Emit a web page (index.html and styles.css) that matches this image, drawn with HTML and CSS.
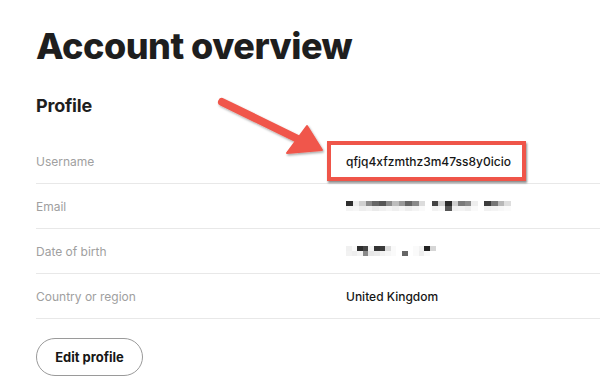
FILE: index.html
```html
<!DOCTYPE html>
<html lang="en">
<head>
<meta charset="utf-8">
<title>Account overview</title>
<link rel="stylesheet" href="styles.css">
</head>
<body>
<main class="page">
  <h1 class="title">Account overview</h1>
  <h2 class="section">Profile</h2>
  <div class="table">
    <div class="row">
      <div class="label">Username</div>
      <div class="value"><span class="highlight">qfjq4xfzmthz3m47ss8y0icio</span></div>
    </div>
    <div class="row">
      <div class="label">Email</div>
      <div class="value">
        <div class="pix wide">
          <div class="pix-line">
            <i style="background:#2e2e2e"></i><i style="background:#eeeeee"></i><i style="background:#d0d0d0"></i><i style="background:#8a8a8a"></i><i style="background:#666"></i><i style="background:#555"></i><i style="background:#8c8c8c"></i><i style="background:#bdbdbd"></i><i style="background:#9a9a9a"></i><i style="background:#666"></i><i style="background:#8a8a8a"></i><i style="background:#dcdcdc"></i><i class="gap"></i><i style="background:#444"></i><i style="background:#cfcfcf"></i><i style="background:#2a2a2a"></i><i style="background:#cfcfcf"></i><i style="background:#7a7a7a"></i><i style="background:#8a8a8a"></i><i style="background:#eee"></i><i class="gap"></i><i style="background:#3c3c3c"></i><i style="background:#777"></i><i style="background:#b8b8b8"></i><i style="background:#dedede"></i>
          </div>
          <div class="pix-line">
            <i style="background:#f4f4f4"></i><i style="background:#f7f7f7"></i><i style="background:#eeeeee"></i><i style="background:#f2f2f2"></i><i style="background:#eaeaea"></i><i style="background:#f0f0f0"></i><i style="background:#f5f5f5"></i><i style="background:#efefef"></i><i style="background:#f6f6f6"></i><i style="background:#eeeeee"></i><i style="background:#f4f4f4"></i><i style="background:#fafafa"></i><i class="gap"></i><i style="background:#f2f2f2"></i><i style="background:#f7f7f7"></i><i style="background:#555"></i><i style="background:#f0f0f0"></i><i style="background:#f3f3f3"></i><i style="background:#eeeeee"></i><i style="background:#fafafa"></i><i class="gap"></i><i style="background:#f1f1f1"></i><i style="background:#f4f4f4"></i><i style="background:#f8f8f8"></i><i style="background:#fbfbfb"></i>
          </div>
        </div>
      </div>
    </div>
    <div class="row">
      <div class="label">Date of birth</div>
      <div class="value">
        <div class="pix">
          <div class="pix-line">
            <i style="background:#f0f0f0"></i><i style="background:#fafafa"></i><i style="background:#2e2e2e"></i><i style="background:#444"></i><i style="background:#f4f4f4"></i><i style="background:#333"></i><i style="background:#3a3a3a"></i><i style="background:#dcdcdc"></i><i style="background:#fafafa"></i><i style="background:#fff"></i><i style="background:#fff"></i><i style="background:#fff"></i><i style="background:#fafafa"></i><i style="background:#f2f2f2"></i><i style="background:#222"></i><i style="background:#d6d6d6"></i>
          </div>
          <div class="pix-line">
            <i style="background:#f2f2f2"></i><i style="background:#eeeeee"></i><i style="background:#f4f4f4"></i><i style="background:#8a8a8a"></i><i style="background:#e6e6e6"></i><i style="background:#eaeaea"></i><i style="background:#f2f2f2"></i><i style="background:#f6f6f6"></i><i style="background:#fafafa"></i><i style="background:#fff"></i><i style="background:#666"></i><i style="background:#fff"></i><i style="background:#fafafa"></i><i style="background:#eeeeee"></i><i style="background:#fafafa"></i><i style="background:#fff"></i>
          </div>
        </div>
      </div>
    </div>
    <div class="row">
      <div class="label">Country or region</div>
      <div class="value">United Kingdom</div>
    </div>
  </div>
  <button class="btn" type="button">Edit profile</button>

  <svg class="arrow" width="130" height="80" viewBox="0 0 130 80" aria-hidden="true">
    <defs>
      <filter id="sh" x="-20%" y="-20%" width="140%" height="140%">
        <feDropShadow dx="1" dy="1.5" stdDeviation="1" flood-color="#000" flood-opacity="0.35"/>
      </filter>
    </defs>
    <g filter="url(#sh)">
      <line x1="8" y1="8" x2="90" y2="48" stroke="#f0574b" stroke-width="8" stroke-linecap="round"/>
      <polygon points="108,56 73,59 93,32" fill="#f0574b" stroke="#f0574b" stroke-width="2" stroke-linejoin="round"/>
    </g>
  </svg>
</main>
</body>
</html>
```
FILE: styles.css
```css
html, body {
  margin: 0;
  padding: 0;
  background: #ffffff;
}

.page {
  position: relative;
  padding: 23px 0 0 36px;
  font-family: "Inter", "Liberation Sans", sans-serif;
  color: #181818;
}

.title {
  margin: 0;
  font-size: 36px;
  line-height: 46px;
  font-weight: 800;
  letter-spacing: -0.5px;
  color: #1e1e1e;
}

.section {
  margin: 26px 0 0 0;
  font-size: 18px;
  line-height: 22px;
  font-weight: 700;
  letter-spacing: -0.2px;
  color: #1e1e1e;
}

.table {
  margin-top: 22px;
}

.row {
  display: grid;
  grid-template-columns: 310px 1fr;
  align-items: center;
  height: 44px;
  border-bottom: 1px solid #e8e8e8;
}

.label {
  font-size: 12px;
  color: #a0a0a0;
  font-weight: 400;
}

.value {
  font-size: 12px;
  font-weight: 500;
  color: #161616;
}

.highlight {
  display: inline-flex;
  align-items: center;
  box-sizing: border-box;
  height: 40px;
  width: 199px;
  margin-left: -19px;
  padding-left: 15px;
  border: 4px solid #ef5549;
  box-shadow: 1px 2px 2px rgba(0, 0, 0, 0.45);
  background: #fff;
}

.pix {
  display: flex;
  flex-direction: column;
}

.pix-line {
  display: flex;
  height: 5px;
}

.pix-line i {
  display: block;
  width: 5.6px;
  height: 5px;
  background: #fff;
}

.pix.wide .pix-line i {
  width: 6.6px;
}

.pix-line i.gap {
  background: transparent;
}

.btn {
  display: flex;
  align-items: center;
  justify-content: center;
  margin-top: 19px;
  width: 107px;
  height: 38px;
  padding: 0;
  border: 1px solid #9a9a9a;
  border-radius: 19px;
  background: #fff;
  font-family: "Inter", "Liberation Sans", sans-serif;
  font-size: 13px;
  font-weight: 700;
  color: #161616;
}

.arrow {
  position: absolute;
  left: 214px;
  top: 94px;
}
```
